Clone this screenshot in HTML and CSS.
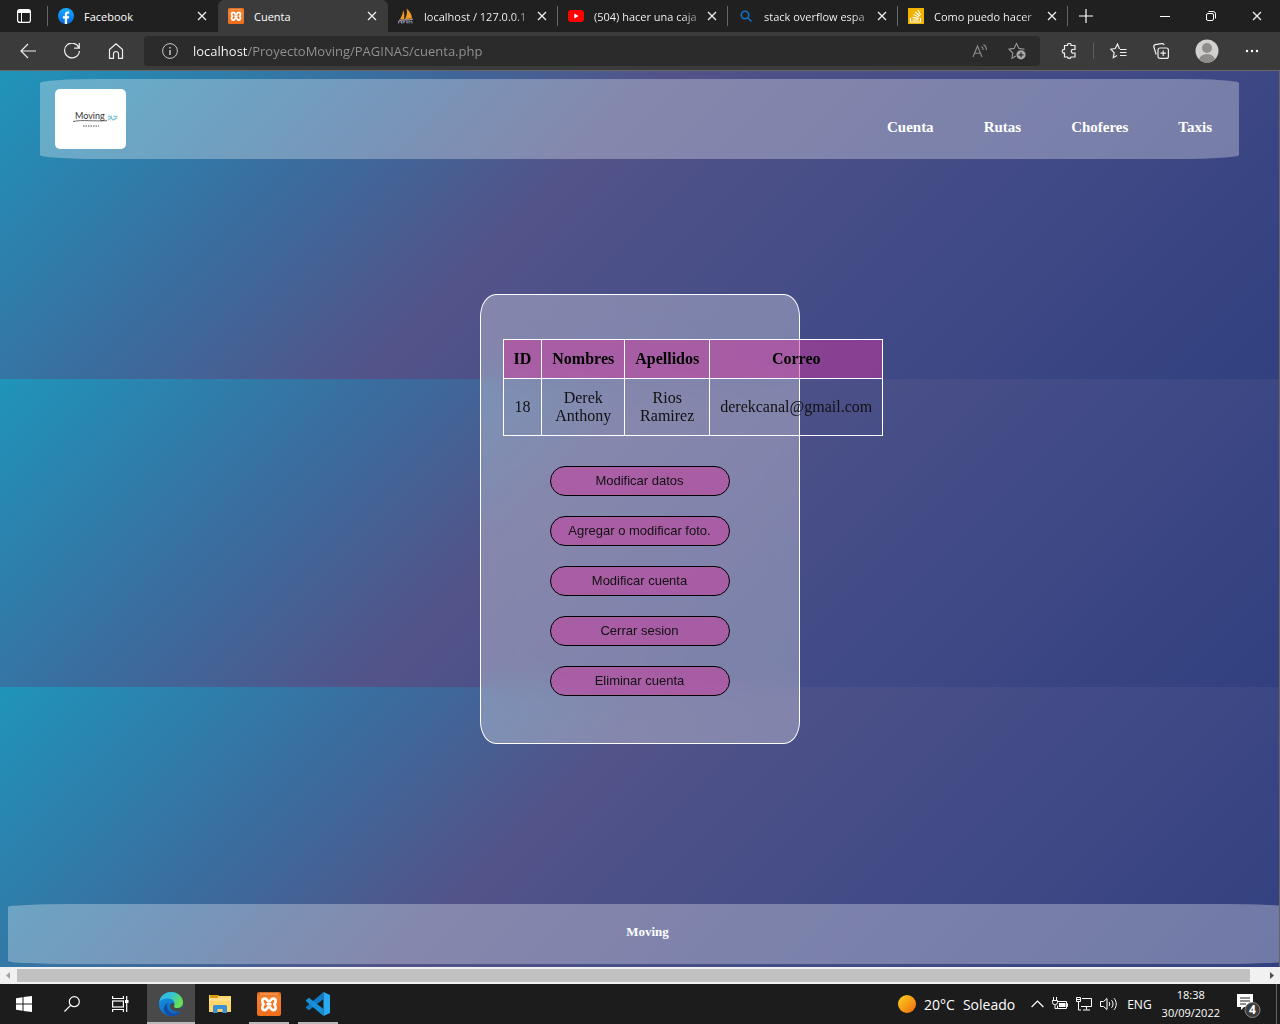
FILE: index.html
```html
<!DOCTYPE html>
<html lang="es">
<head>
<meta charset="utf-8">
<meta name="viewport" content="width=device-width, initial-scale=1">
<title>Cuenta</title>
<link rel="stylesheet" href="styles.css">
</head>
<body>
<svg class="defs" aria-hidden="true">
  <defs>
    <linearGradient id="xg" x1="0" y1="0" x2="0" y2="1"><stop offset="0" stop-color="#d9641c"/><stop offset=".2" stop-color="#f5802e"/><stop offset="1" stop-color="#ee6d1b"/></linearGradient>
    <linearGradient id="fbg" x1="0" y1="0" x2="0" y2="1"><stop offset="0" stop-color="#1aaeff"/><stop offset="1" stop-color="#0567e4"/></linearGradient>
    <linearGradient id="eg1" x1="0" y1="0" x2="1" y2=".4"><stop offset="0" stop-color="#2fb4e8"/><stop offset=".55" stop-color="#35c6d0"/><stop offset="1" stop-color="#6be14c"/></linearGradient>
    <linearGradient id="eg2" x1="0" y1="0" x2=".6" y2="1"><stop offset="0" stop-color="#1b9be6"/><stop offset="1" stop-color="#0a64c4"/></linearGradient>
    <linearGradient id="sun" x1="0" y1="0" x2="1" y2="1"><stop offset="0" stop-color="#ffd21c"/><stop offset="1" stop-color="#ee6a10"/></linearGradient>
    <symbol id="close" viewBox="0 0 10 10"><path d="M1 1l8 8M9 1l-8 8" stroke="#eee" stroke-width="1.3" fill="none"/></symbol>
    <symbol id="xampp" viewBox="0 0 24 24">
      <rect width="24" height="24" rx="2" fill="url(#xg)"/><path d="M3 2h18" stroke="#f9b27c" stroke-width="1"/>
      <path d="M8 6.500c2.200 0 2.300 3.200 4 3.200s1.800-3.200 4-3.200c3.200 0 3.400 3.800 1.300 5.800c2.100 2 1.900 5.800-1.300 5.800c-2.200 0-2.300-3.200-4-3.200s-1.800 3.200-4 3.200c-3.200 0-3.400-3.800-1.300-5.800c-2.100-2-1.900-5.800 1.300-5.800z" fill="none" stroke="#fff" stroke-width="2.700" stroke-linejoin="round"/>
      <path d="M9.500 12.300h5" stroke="#fff" stroke-width="2.600"/>
    </symbol>
  </defs>
</svg>

<div class="browser">
  <div class="tabstrip">
    <button class="tabmenu" aria-label="Menú de pestañas"><svg width="14" height="14" viewBox="0 0 14 14" fill="none" stroke="#fff"><rect x=".6" y=".6" width="12.800" height="12.800" rx="2.200" stroke-width="1.200"/><path d="M1 2.500h12" stroke-width="3"/><path d="M4.500 4v9"/></svg></button>
    <div class="tab">
      <svg width="16" height="16" viewBox="0 0 16 16"><circle cx="8" cy="8" r="8" fill="url(#fbg)"/><path d="M6.800 16v-5.500H4.900V8.200h1.900V6.500c0-2 1.200-3 2.900-3 .8 0 1.500.1 1.500.1v2h-.9c-.9 0-1.200.5-1.200 1.100v1.500h2.100l-.4 2.300H9.100V16z" fill="#fff"/></svg>
      <button class="title">Facebook</button><button class="x" aria-label="Cerrar Facebook"><svg width="10" height="10"><use href="#close"/></svg></button>
    </div>
    <div class="tab active">
      <svg width="16" height="16"><use href="#xampp"/></svg>
      <button class="title">Cuenta</button><button class="x" aria-label="Cerrar Cuenta"><svg width="10" height="10"><use href="#close"/></svg></button>
    </div>
    <div class="tab ruled">
      <svg width="16" height="16" viewBox="0 0 16 16"><path d="M2 11C4 8 5 5 5 2c1.500 3 1.500 6 1 9zM7 11c2-4 2.500-7 1.500-10.500C12 3 14 7 14 10.500z" fill="#f39a26"/><path d="M1 12.500c4-1.500 9 .5 14-1.500" stroke="#b9a7a0" stroke-width="1.200" fill="none"/><path d="M.5 15.500V13l1.500 1.500L3.500 13v2.500M5 15.500V13h1.500v1.200H5M9 13v2.500M8 14h2M11 15.500V13l1.500 1 1.500-1v2.500" stroke="#8587a8" fill="none"/></svg>
      <button class="title fade">localhost / 127.0.0.1</button><button class="x" aria-label="Cerrar localhost"><svg width="10" height="10"><use href="#close"/></svg></button>
    </div>
    <div class="tab ruled">
      <svg width="16" height="16" viewBox="0 0 16 16"><rect y="2" width="16" height="12" rx="3" fill="#f00"/><path d="M6.300 5.500v5L10.600 8z" fill="#fff"/></svg>
      <button class="title fade">(504) hacer una caja</button><button class="x" aria-label="Cerrar YouTube"><svg width="10" height="10"><use href="#close"/></svg></button>
    </div>
    <div class="tab ruled">
      <svg width="16" height="16" viewBox="0 0 16 16" fill="none" stroke="#1372c6" stroke-width="1.600"><circle cx="7" cy="7" r="3.700"/><path d="M9.800 9.800l3.700 3.700"/></svg>
      <button class="title fade">stack overflow espa</button><button class="x" aria-label="Cerrar búsqueda"><svg width="10" height="10"><use href="#close"/></svg></button>
    </div>
    <div class="tab ruled">
      <svg width="16" height="16" viewBox="0 0 16 16"><rect width="16" height="16" fill="#f2b200"/><path d="M2.500 10v4h10v-4M4.500 12h6M4.600 9.400l6 1.200M5.500 6.500l5.500 2.800M7.200 4l4.600 4M9.800 2l3 5" fill="none" stroke="#fff" stroke-width="1.100"/></svg>
      <button class="title fade">Como puedo hacer</button><button class="x" aria-label="Cerrar Stack Overflow"><svg width="10" height="10"><use href="#close"/></svg></button>
    </div>
    <button class="newtab" aria-label="Nueva pestaña"><svg width="14" height="14" viewBox="0 0 14 14"><path d="M7 0v14M0 7h14" stroke="#fff" stroke-width="1.200"/></svg></button>
    <div class="winctl">
      <button aria-label="Minimizar"><svg width="10" height="10"><path d="M0 5.500h10" stroke="#fff"/></svg></button>
      <button aria-label="Restaurar"><svg width="10" height="10" viewBox="0 0 10 10" fill="none" stroke="#fff"><rect x=".5" y="2.500" width="7" height="7" rx="1.500"/><path d="M2.500.5H7A2.500 2.500 0 0 1 9.500 3v4.500"/></svg></button>
      <button aria-label="Cerrar"><svg width="10" height="10"><use href="#close"/></svg></button>
    </div>
  </div>

  <div class="toolbar">
    <div class="navbtns">
      <button aria-label="Atrás"><svg width="16" height="16" viewBox="0 0 16 16" fill="none" stroke="#eee" stroke-width="1.200"><path d="M16 8H1M8 1L1 8l7 7"/></svg></button>
      <button aria-label="Actualizar"><svg width="16" height="16" viewBox="0 0 16 16" fill="none" stroke="#eee" stroke-width="1.200"><path d="M15 5A7.400 7.400 0 1 0 15.400 8M15.300 0v5.200h-5.200"/></svg></button>
      <button aria-label="Inicio"><svg width="16" height="16" viewBox="0 0 16 16" fill="none" stroke="#eee" stroke-width="1.200" stroke-linejoin="round"><path d="M1.500 6.500L8 .8l6.500 5.700v8.900h-4V11a2.500 2.500 0 0 0-5 0v4.400h-4z"/></svg></button>
    </div>
    <div class="address">
      <svg width="16" height="16" viewBox="0 0 16 16" fill="none" stroke="#c8c8c8"><circle cx="8" cy="8" r="7.400"/><path d="M8 7v5M8 4v1.600" stroke-width="1.500"/></svg>
      <input class="url" type="text" aria-label="Dirección" value="localhost/ProyectoMoving/PAGINAS/cuenta.php">
      <button aria-label="Leer en voz alta"><svg width="16" height="16" viewBox="0 0 16 16" fill="none" stroke="#8d8d8d" stroke-width="1.100"><path d="M1 14L5.500 3 10 14M2.600 10.300h5.800M9.500 3.500c1.200.8 1.700 2 1.600 3.500M11.500 1.500c2 1.300 3 3.200 2.800 5.500"/></svg></button>
      <button aria-label="Agregar a favoritos"><svg width="18" height="18" viewBox="0 0 18 18"><path d="M8 14l-4 2.200.8-5.200L1 7.200l5-.8L8.500 1.500 11 6.400l5.500.8" fill="none" stroke="#999" stroke-width="1.100"/><circle cx="13" cy="12.800" r="4.600" fill="#a8a8a8"/><path d="M13 10.300v5M10.500 12.800h5" stroke="#2b2b2b" stroke-width="1.200"/></svg></button>
    </div>
    <div class="tools">
      <button aria-label="Extensiones"><svg width="16" height="16" viewBox="0 0 16 16" fill="none" stroke="#eee" stroke-width="1.200"><path d="M3.500 2.500h3a1.800 1.800 0 1 1 3.500 0h4v4h-1.500a1.800 1.800 0 1 0 0 3.500H14v4h-4a1.800 1.800 0 0 1-3.500 0h-3V10a1.800 1.800 0 1 1 0-3.500z"/></svg></button>
      <span class="rule"></span>
      <button aria-label="Favoritos"><svg width="17" height="16" viewBox="0 0 17 16" fill="none" stroke="#eee" stroke-width="1.200"><path d="M9.500 6L7.500 1 5.300 5.500.8 6.200l3.300 3.500-.8 5L7 12.500M10 6.500h6.500M10 9.500h6.500M10 12.500h6.500"/></svg></button>
      <button aria-label="Colecciones"><svg width="16" height="16" viewBox="0 0 16 16" fill="none" stroke="#eee" stroke-width="1.200"><rect x="5" y="5" width="10.400" height="10.400" rx="2"/><path d="M10.200 7.500v5.500M7.500 10.200H13M3.200 11.500L.8 3.800a2 2 0 0 1 1.300-2.200l6.700-1a2 2 0 0 1 2.300 1.600"/></svg></button>
      <button aria-label="Perfil"><svg width="24" height="24" viewBox="0 0 24 24"><clipPath id="pc"><circle cx="12" cy="12" r="11.500"/></clipPath><g clip-path="url(#pc)"><path d="M0 0h24v24H0z" fill="#d2d0ce"/><circle cx="12" cy="9" r="5" fill="#8f8d8b"/><ellipse cx="12" cy="21" rx="8" ry="6" fill="#8f8d8b"/></g></svg></button>
      <button aria-label="Configuración y más"><svg width="14" height="4" viewBox="0 0 14 4" fill="#fff"><circle cx="2" cy="2" r="1.200"/><circle cx="7" cy="2" r="1.200"/><circle cx="12" cy="2" r="1.200"/></svg></button>
    </div>
  </div>
</div>

<div class="page">
  <header class="site-header">
    <svg class="logo" width="71" height="60" viewBox="0 0 71 60" role="img" aria-label="Moving">
      <text x="20" y="30" class="logo-name">Moving</text>
      <path d="M18 32.500c10-2 20 0 34-.8" stroke="#444" stroke-width=".8" fill="none"/>
      <path d="M53 27.500h4M58.500 27.500h4M53 31l3-2 2 2 4-2" stroke="#8cc9d6" stroke-width="1.400" fill="none"/>
      <path d="M28 37h16" stroke="#888" stroke-width="1.500" stroke-dasharray="1.500 1"/>
    </svg>
    <nav class="menu">
      <a href="#cuenta">Cuenta</a><a href="#rutas">Rutas</a><a href="#choferes">Choferes</a><a href="#taxis">Taxis</a>
    </nav>
  </header>
  <main class="content">
    <section class="card">
      <table>
        <thead><tr><th>ID</th><th>Nombres</th><th>Apellidos</th><th>Correo</th></tr></thead>
        <tbody><tr><td>18</td><td>Derek Anthony</td><td>Rios Ramirez</td><td>derekcanal@gmail.com</td></tr></tbody>
      </table>
      <div class="actions">
        <button>Modificar datos</button>
        <button>Agregar o modificar foto.</button>
        <button>Modificar cuenta</button>
        <button>Cerrar sesion</button>
        <button>Eliminar cuenta</button>
      </div>
    </section>
  </main>
  <footer class="site-footer">Moving</footer>
</div>

<div class="hscroll">
  <svg width="17" height="17" viewBox="0 0 17 17"><path d="M10 5v7L6 8.500z" fill="#a3a3a3"/></svg>
  <span class="thumb"></span>
  <svg width="17" height="17" viewBox="0 0 17 17"><path d="M7 5v7l4-3.500z" fill="#505050"/></svg>
</div>

<div class="taskbar">
  <div class="apps">
    <button aria-label="Inicio"><svg width="16" height="16" viewBox="0 0 16 16" fill="#fff"><path d="M0 2.200L6.500 1.300v6.300H0zM7.500 1.100L16 0v7.600H7.500zM0 8.500h6.500v6.200L0 13.800zM7.500 8.500H16V16l-8.500-1.100z"/></svg></button>
    <button aria-label="Buscar"><svg width="16" height="16" viewBox="0 0 16 16" fill="none" stroke="#fff" stroke-width="1.200"><circle cx="10.300" cy="5.700" r="5"/><path d="M6.800 9.200L.5 15.500"/></svg></button>
    <button aria-label="Vista de tareas"><svg width="17" height="16" viewBox="0 0 17 16" fill="none" stroke="#fff" stroke-width="1.200"><path d="M.6 0v2.500h10.800V0M.6 16v-2.500h10.800V16M14.700 0v16"/><rect x=".6" y="5" width="10.800" height="6"/><path d="M13 5.500h3.500" stroke-width="3"/></svg></button>
  </div>
  <div class="apps pinned">
    <button class="focus" aria-label="Microsoft Edge"><svg width="24" height="24" viewBox="0 0 24 24"><circle cx="12" cy="12" r="12" fill="url(#eg2)"/><path d="M.3 10C1.500 3.800 6.200 0 12 0c7 0 12 5 12 10.500 0 3.500-2.500 5.700-5.500 5.700-3 0-4.300-1.200-3.300-2.700C16.500 10.500 14 7 9.500 6.600 5.500 6.200 1.800 7.500.3 10z" fill="url(#eg1)"/><path d="M8.800 11c-2 4 .8 10.500 7 10.500 3 0 4.700-1 6-2.300-3 6-11.300 6.500-15.300 2C3.600 18 4.500 13 8.800 11z" fill="#1250a5"/><path d="M15.200 13.500c-1 1.500.3 2.700 3.300 2.700 2 0 3.900-.9 4.700-2.400.6 1.900-.2 4-1.600 5.400-4 1.300-10.600-.5-10.600-5.200 0-1.500.8-2.600 2-3 1.800-.2 2.900 1.200 2.200 2.500z" fill="#494949"/></svg></button>
    <button aria-label="Explorador de archivos"><svg width="22" height="18" viewBox="0 0 22 18"><path d="M0 0h9l1 1h12v16H0z" fill="#ffd667"/><path d="M1 0h8v3H1z" fill="#dc9b0c"/><path d="M0 3h22v3H0z" fill="#ffe08a"/><path d="M4 18v-6.500a1.500 1.500 0 0 1 1.500-1.500h11a1.500 1.500 0 0 1 1.500 1.500V18h-4.500v-4h-5v4z" fill="#3a8fd6"/></svg></button>
    <button class="open" aria-label="XAMPP"><svg width="24" height="24"><use href="#xampp"/></svg></button>
    <button class="open" aria-label="Visual Studio Code"><svg width="24" height="24" viewBox="0 0 24 24"><path d="M17.500 0v7L3 18.300 0 16v-1L17.500 0z" fill="#0f7ac6"/><path d="M17.500 24v-7L3 5.700 0 8v1.200L17.500 24z" fill="#1690d9"/><path d="M17.500 0L24 3v18l-6.500 3z" fill="#2aa9f3"/></svg></button>
  </div>
  <div class="tray">
    <button class="weather"><svg width="18" height="18"><circle cx="9" cy="9" r="9" fill="url(#sun)"/></svg><span>20°C</span><span>Soleado</span></button>
    <div class="status">
      <svg width="13" height="8" viewBox="0 0 13 8"><path d="M.6 7l5.900-6 5.900 6" fill="none" stroke="#fff" stroke-width="1.200"/></svg>
      <svg width="16" height="14" viewBox="0 0 16 14" fill="none" stroke="#fff"><path d="M6 4.500h8.500v7h-9v-3M14.500 6.500h1v3h-1M1.500 0v3M4.500 0v3M.5 3.500h5v2a2 2 0 0 1-2 2h-1a2 2 0 0 1-2-2zM3 7.500v4h2"/><path d="M7 6h6.500v4H7z" fill="#fff" stroke="none"/></svg>
      <svg width="16" height="14" viewBox="0 0 16 14" fill="none" stroke="#fff"><path d="M6 1.500h9.500v8H5M10.500 9.500v3M7 13h7M.5.500h4v4h-4zM2.500 4.500V13H5M.5 2.500h4"/></svg>
      <svg width="17" height="14" viewBox="0 0 17 14" fill="none" stroke="#fff"><path d="M.5 4.500h3l3.500-3v11l-3.500-3h-3zM9 5c1 1.300 1 2.700 0 4M11.500 3.200c2 2.300 2 5.300 0 7.600M14 1.200c3 3.500 3 8 0 11.600"/></svg>
    </div>
    <span class="lang">ENG</span>
    <div class="clock"><span>18:38</span><span>30/09/2022</span></div>
    <button class="notes" aria-label="Notificaciones"><svg width="24" height="26" viewBox="0 0 24 26"><path d="M0 0h16v13H7l-3 3v-3H0z" fill="#fff"/><path d="M3 4h10M3 7h10M3 10h6" stroke="#222"/><circle cx="15.500" cy="16" r="7.500" fill="#3b3b3b" stroke="#888"/><text x="15.500" y="20" text-anchor="middle" class="count">4</text></svg></button>
  </div>
</div>
</body>
</html>
```

FILE: styles.css
```css
* { box-sizing: border-box; }

body {
  margin: 0;
  min-height: 100vh;
  display: flex;
  flex-direction: column;
  font-family: "Open Sans", "Noto Sans", sans-serif;
  color: #fff;
  overflow-x: hidden;
}

button {
  font: inherit;
  color: inherit;
  background: none;
  border: 0;
  padding: 0;
}

svg { display: block; flex: none; }
.defs { position: absolute; width: 0; height: 0; }

/* Browser window */
.browser {
  background: #3b3b3b;
  border-bottom: 1px solid #686868;
}

.tabstrip {
  display: flex;
  height: 32px;
  background: #202020;
  font-size: 11px;
}

.tabmenu {
  width: 48px;
  display: grid;
  place-items: center;
  border-right: 1px solid #666;
  margin: 6px 0;
}

.tab {
  flex: 0 1 170px;
  min-width: 0;
  display: flex;
  align-items: center;
  gap: 10px;
  padding: 0 11px 0 10px;
}

.tab.active {
  background: #3b3b3b;
  border-radius: 6px 6px 0 0;
}

.tab.ruled { background: linear-gradient(#666, #666) right center / 1px 20px no-repeat; }

.tab .title {
  flex: 1;
  min-width: 0;
  white-space: nowrap;
  text-align: left;
}

/* Long titles run into the gap before the close button and fade out there */
.tab .fade {
  margin-right: -8px;
  color: transparent;
  background: linear-gradient(90deg, #fff 88px, #555 108px);
  background-clip: text;
}

.tab .x { padding: 1px 0; }
.newtab { width: 36px; display: grid; place-items: center; }

.winctl { margin-left: auto; display: flex; }
.winctl button { width: 46px; display: grid; place-items: center; }

.toolbar {
  display: flex;
  align-items: center;
  height: 38px;
}

.navbtns { display: flex; gap: 28px; padding: 0 20px; }

.address {
  flex: 1;
  min-width: 0;
  height: 30px;
  display: flex;
  align-items: center;
  gap: 20px;
  padding: 0 14px 0 18px;
  background: #2b2b2b;
  border-radius: 4px;
}

.url {
  flex: 1;
  min-width: 0;
  margin-left: -5px;
  padding: 0;
  border: 0;
  outline: 0;
  font: 13px "Open Sans", "Noto Sans", sans-serif;
  color: transparent;
  background: linear-gradient(90deg, #fff 55px, #949494 55px);
  background-clip: text;
}

.tools { display: flex; align-items: center; gap: 26px; padding: 0 21px; }
.tools .rule { width: 1px; height: 16px; margin: 0 -10px; background: #5c5c5c; }

/* Web page */
.page {
  flex: 1;
  display: flex;
  flex-direction: column;
  padding: 8px 0 3px;
  overflow: hidden;
  border-right: 1px solid #666;
  font-family: "Liberation Serif", "Times New Roman", serif;
  background: linear-gradient(135deg, #1f94ba 0%, #3b6c9e 25%, #525389 42%, #404a86 72%, #32407f 100%) 0 0 / 100% 308px;
}

.site-header {
  display: flex;
  justify-content: space-between;
  align-items: center;
  height: 80px;
  margin: 0 40px;
  padding: 0 27px 0 15px;
  background: rgba(255, 255, 255, .3);
  border-radius: 5%;
}

.logo { background: #fff; border-radius: 5px; }
.logo-name { font: 9px "Lato", sans-serif; fill: #333; }

.menu { display: flex; gap: 50px; padding-top: 16px; }
.menu a { color: #fff; font-size: 15px; font-weight: bold; text-decoration: none; }

.content {
  flex: 1;
  display: grid;
  place-items: center;
  padding: 16px 0 42px;
}

.card {
  width: 320px;
  min-height: 450px;
  padding: 44px 22px;
  border: 1px solid #fff;
  border-radius: 5%;
  background: rgba(255, 255, 255, .3);
  backdrop-filter: blur(15px);
  color: #000;
}

.card table { width: 100%; border-collapse: collapse; text-align: center; font-size: 16px; line-height: 18px; }
.card th, .card td { border: 1px solid #fff; padding: 10px; color: #111; }
.card th { background: rgba(208, 56, 157, .5); color: #000; }

.actions { display: grid; justify-content: center; gap: 20px; margin-top: 30px; }

.actions button {
  width: 180px;
  height: 30px;
  border: 1px solid #000;
  border-radius: 15px;
  background: rgba(208, 56, 157, .5);
  color: #111;
  font: 13px "Liberation Sans", Arial, sans-serif;
}

.site-footer {
  width: 100%;
  height: 60px;
  margin-left: 8px;
  display: grid;
  place-items: center;
  padding-bottom: 4px;
  background: rgba(255, 255, 255, .3);
  border-radius: 5%;
  font-size: 13px;
  font-weight: bold;
}

.hscroll {
  display: flex;
  align-items: center;
  height: 17px;
  background: #f1f1f1;
}

.hscroll .thumb { flex: 1; height: 13px; margin-right: 13px; background: #c1c1c1; }

/* Taskbar */
.taskbar {
  display: flex;
  gap: 3px;
  height: 40px;
  background: #1c1c1c;
}

.apps { display: flex; }
.apps.pinned { gap: 1px; }
.apps button { width: 48px; display: grid; place-items: center; }
.apps .focus { background: linear-gradient(#bdb8b8, #bdb8b8) bottom / 100% 2px no-repeat #494949; }
.apps .open { background: linear-gradient(#bdb8b8, #bdb8b8) bottom / 40px 2px no-repeat; }

.tray {
  display: flex;
  align-items: center;
  gap: 10px;
  margin: 0 3px 0 auto;
  padding-right: 15px;
  border-right: 1px solid #666;
  font-size: 12px;
}

.weather { display: flex; align-items: center; gap: 8px; margin-right: 6px; font-size: 14px; }
.status { display: flex; align-items: center; gap: 8px; }
.clock { display: grid; justify-items: center; font-size: 11px; line-height: 18px; }
.notes { margin: 6px 0 0 7px; }
.count { font: bold 12px "Open Sans", sans-serif; fill: #fff; }
```
